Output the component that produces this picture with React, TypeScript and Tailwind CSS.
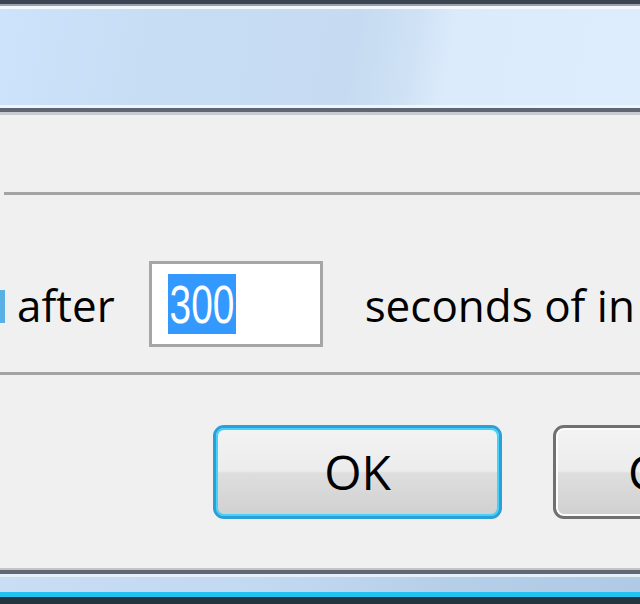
export default function App() {
  return (
    <div className="relative h-[604px] w-[640px] overflow-hidden bg-[#f0f0f0] font-['Open_Sans','Noto_Sans',sans-serif] text-black">
      {/* Title bar of the window frame */}
      <div className="h-[4px] bg-[#3b4552]" />
      <div className="h-[2px] bg-[#9aa3ad]" />
      <div className="h-[3px] bg-[#f4f8fc]" />
      <div className="h-[96px] bg-[linear-gradient(100deg,#cde3fb_0%,#c7ddf4_25%,#c6dbf1_55%,#cfe2f5_64%,#dcebfc_70%,#deedfc_100%)]" />
      <div className="h-[3px] bg-[#eef5fd]" />
      <div className="h-[4px] bg-[#5d6672]" />
      <div className="h-[3px] bg-[#c8ccd2]" />

      {/* Dialog body */}
      <div className="mt-[77px] ml-[4px] h-[3px] bg-[#a3a3a3]" />

      <div className="mt-[66px] flex h-[86px] items-center">
        <div className="mt-[4px] h-[33px] w-[5px] shrink-0 bg-[#5ab0e4]" />
        <span className="ml-[12px] shrink-0 pt-[2px] text-[44px] leading-none font-medium">after</span>
        <div className="ml-[34px] flex h-[86px] w-[174px] shrink-0 items-center border-[3px] border-[#a6a6a6] bg-white pl-[16px]">
          <div className="flex h-[60px] w-[68px] items-center justify-center overflow-hidden bg-[#3399ff]">
            <span className="inline-block scale-x-[0.72] font-['Liberation_Sans',sans-serif] text-[54px] leading-none text-white">
              300
            </span>
          </div>
        </div>
        <span className="ml-[42px] shrink-0 pt-[2px] text-[44px] leading-none font-medium whitespace-nowrap">
          seconds of in
        </span>
      </div>

      <div className="mt-[25px] h-[3px] bg-[#a3a3a3]" />

      <div className="mt-[50px] flex">
        <button
          type="button"
          className="ml-[213px] flex h-[94px] w-[289px] shrink-0 items-center justify-center rounded-[11px] border-[3px] border-[#2c9fd8] bg-[linear-gradient(180deg,#f3f3f3_0%,#ececec_49%,#dedede_51%,#d0d0d0_100%)] shadow-[inset_0_0_0_2px_#44d2fa]"
        >
          <span className="text-[48px] leading-none">OK</span>
        </button>
        <button
          type="button"
          className="ml-[51px] flex h-[94px] w-[289px] shrink-0 items-center justify-start rounded-[11px] border-[3px] border-[#707070] bg-[linear-gradient(180deg,#f3f3f3_0%,#ececec_49%,#dedede_51%,#d0d0d0_100%)] pl-[72px] shadow-[inset_0_0_0_2px_#fcfcfc]"
        >
          <span className="text-[48px] leading-none">Cancel</span>
        </button>
      </div>

      {/* Bottom frame */}
      <div className="mt-[49px] h-[2px] bg-[#c2c4c8]" />
      <div className="h-[4px] bg-[#5f6873]" />
      <div className="h-[3px] bg-[#e4eef9]" />
      <div className="h-[15px] bg-[linear-gradient(90deg,#c9ddf4_0%,#c2d9f2_40%,#b6cfe9_70%,#b0c9e4_100%)]" />
      <div className="h-[5px] bg-[#22c2f2]" />
      <div className="h-[10px] bg-[#263440]" />
    </div>
  );
}
